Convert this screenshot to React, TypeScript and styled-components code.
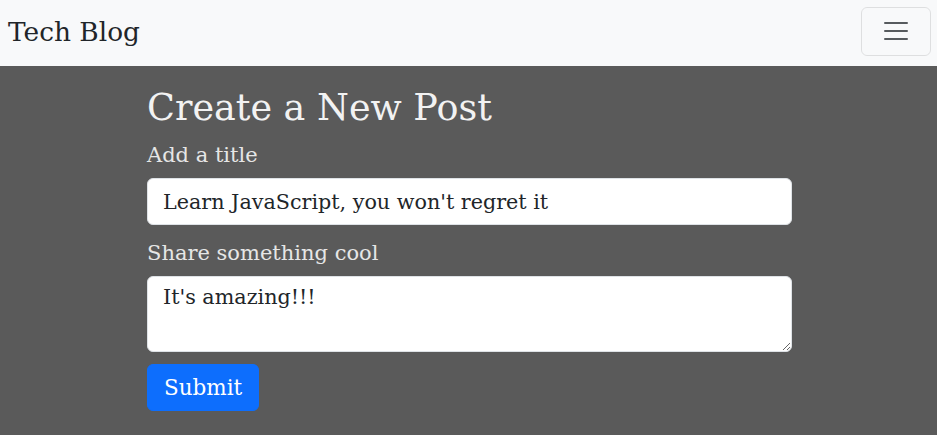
import React, { useState } from 'react';
import styled, { createGlobalStyle } from 'styled-components';

const GlobalStyle = createGlobalStyle`
    * {
        box-sizing: border-box;
    }
    body {
        margin: 0;
        background: #5a5a5a;
        font-family: "DejaVu Serif", "Liberation Serif", serif;
    }
`;

const NavBar = styled.nav`
    display: flex;
    align-items: center;
    justify-content: space-between;
    height: 66px;
    padding: 0 6px 4px 8px;
    background: #f8f9fa;
`;

const Brand = styled.a`
    font-size: 26.4px;
    color: #212529;
    text-decoration: none;
`;

const Toggler = styled.button`
    display: flex;
    align-items: center;
    justify-content: center;
    width: 70px;
    height: 49px;
    padding: 0;
    background: transparent;
    border: 1px solid rgba(0, 0, 0, 0.1);
    border-radius: 6px;
`;

const Main = styled.main`
    width: 645px;
    margin-left: 147px;
    padding-top: 18px;
    display: flex;
    flex-direction: column;
`;

const Heading = styled.h1`
    margin: 0 0 8px;
    font-size: 36.5px;
    font-weight: 400;
    line-height: 48px;
    color: #f2f2f2;
`;

const Field = styled.div<{ $gap: number }>`
    display: flex;
    flex-direction: column;
    margin-bottom: ${p => p.$gap}px;
`;

const Label = styled.label`
    font-size: 21px;
    line-height: 30px;
    margin-bottom: 8px;
    color: #e6e6e6;
`;

const inputCss = `
    width: 100%;
    padding: 8px 15px;
    font-family: inherit;
    font-size: 20.7px;
    line-height: 30px;
    color: #212529;
    background: #fff;
    border: 1px solid #dee2e6;
    border-radius: 6px;
    outline: none;
`;

const TextInput = styled.input`
    ${inputCss}
    height: 47px;
`;

const TextArea = styled.textarea`
    ${inputCss}
    height: 76px;
    padding-top: 5px;
    resize: vertical;
`;

const SubmitButton = styled.button`
    align-self: flex-start;
    height: 47px;
    padding: 0 16px;
    font-family: inherit;
    font-size: 21.5px;
    color: #fff;
    background: #0d6efd;
    border: 1px solid #0d6efd;
    border-radius: 6px;
    cursor: pointer;
`;

const MenuIcon = () => (
    <svg width="30" height="30" viewBox="0 0 30 30">
        <path
            d="M4 7h22M4 15h22M4 23h22"
            stroke="rgba(33, 37, 41, 0.75)"
            strokeWidth="2"
            strokeLinecap="round"
        />
    </svg>
);

export default function App() {
    const [title, setTitle] = useState("Learn JavaScript, you won't regret it");
    const [body, setBody] = useState("It's amazing!!!");

    return (
        <>
            <GlobalStyle />
            <NavBar>
                <Brand href="#">Tech Blog</Brand>
                <Toggler aria-label="Toggle navigation">
                    <MenuIcon />
                </Toggler>
            </NavBar>
            <Main>
                <Heading>Create a New Post</Heading>
                <Field $gap={13}>
                    <Label htmlFor="title">Add a title</Label>
                    <TextInput id="title" value={title} onChange={e => setTitle(e.target.value)} />
                </Field>
                <Field $gap={12}>
                    <Label htmlFor="body">Share something cool</Label>
                    <TextArea id="body" value={body} onChange={e => setBody(e.target.value)} />
                </Field>
                <SubmitButton type="submit">Submit</SubmitButton>
            </Main>
        </>
    );
}
